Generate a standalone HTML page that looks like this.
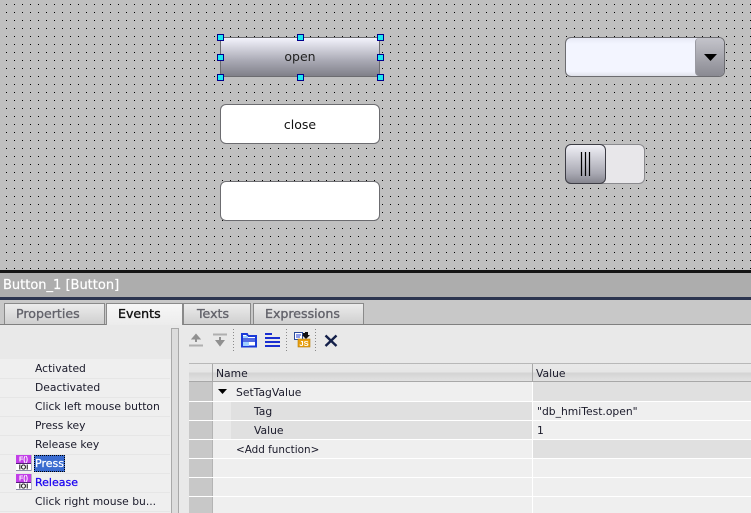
<!DOCTYPE html>
<html><head><meta charset="utf-8">
<style>
html,body{margin:0;padding:0}
body{width:751px;height:513px;overflow:hidden;position:relative;background:#e9e9e9;font-family:"DejaVu Sans",sans-serif;font-size:10.75px;color:#1a1a2a}
div,svg{position:absolute}
.t{white-space:nowrap;line-height:14px}
.btn{box-sizing:border-box;border:1px solid #6c6c70;border-radius:6px;text-align:center}
.h{width:5px;height:5px;background:#1fe8f0;border:1px solid #00008c}
.tab{box-sizing:border-box;top:303px;height:21px;border:1px solid #8a8a8a;border-bottom:none;background:linear-gradient(#ececec,#cfcfcf);color:#63636b;font-size:12.6px;line-height:20px;padding-left:11px;text-align:left;white-space:nowrap;-webkit-text-stroke:.35px #63636b}
.sep{left:0;width:170px;height:1px;background:#e6e6e6}
</style></head><body>

<!-- canvas -->
<svg style="left:0;top:0" width="751" height="270"><defs><pattern id="d" x="6" y="4" width="8" height="8" patternUnits="userSpaceOnUse"><rect width="1" height="1" fill="#000"/></pattern></defs><rect width="751" height="270" fill="#c0c0c0"/><rect width="751" height="270" fill="url(#d)"/></svg>

<!-- open -->
<div class="btn" style="left:220px;top:37px;width:160px;height:40px;background:linear-gradient(#f3f3fc,#a9a9b4 60%,#808089);font-size:12.5px;line-height:38px;color:#222;border-radius:4px">open</div>
<div class="h" style="left:217px;top:34px"></div><div class="h" style="left:297px;top:34px"></div><div class="h" style="left:377px;top:34px"></div>
<div class="h" style="left:217px;top:54px"></div><div class="h" style="left:377px;top:54px"></div>
<div class="h" style="left:217px;top:74px"></div><div class="h" style="left:297px;top:74px"></div><div class="h" style="left:377px;top:74px"></div>
<!-- close -->
<div class="btn" style="left:220px;top:104px;width:160px;height:40px;background:#fff;font-size:12.5px;line-height:39px;color:#111">close</div>
<!-- empty -->
<div class="btn" style="left:220px;top:181px;width:160px;height:40px;background:#fff"></div>
<!-- combo -->
<div class="btn" style="left:565px;top:37px;width:160px;height:40px;background:linear-gradient(#e6e8f4,#f3f5ff 15%,#f3f5ff 88%,#dfe1ea);overflow:hidden">
<div style="left:129px;top:0;width:29px;height:38px;background:linear-gradient(#c4c4cb,#8a8a92);border-left:1px solid #9a9aa2;border-radius:4px 0 0 4px"></div>
<svg style="left:138px;top:16px" width="14" height="8"><path d="M0 0H13L6.5 7Z" fill="#000"/></svg>
</div>
<!-- toggle -->
<div class="btn" style="left:565px;top:144px;width:80px;height:40px;background:#e8e7ea;border-color:#8a8a8e"></div>
<div class="btn" style="left:565px;top:144px;width:41px;height:40px;background:linear-gradient(#f0f0f6,#a8a8b2 75%,#85858e);border-color:#3c3c44;border-width:1.5px"></div>
<svg style="left:580px;top:152px" width="12" height="24"><path d="M1.5 0V24M5.5 0V24M9.5 0V24" stroke="#000" stroke-width="1.2"/></svg>

<!-- divider + title -->
<div style="left:0;top:270px;width:751px;height:3px;background:#141414"></div>
<div style="left:0;top:273px;width:751px;height:24px;background:#adadad"></div>
<div class="t" style="left:3px;top:279px;color:#fff;font-size:13px;-webkit-text-stroke:.2px #fff">Button_1 [Button]</div>
<div style="left:0;top:297px;width:751px;height:3px;background:#2c3550"></div>

<!-- tabs -->
<div style="left:0;top:300px;width:751px;height:24px;background:#c8c8c8"></div>
<div style="left:0;top:324px;width:751px;height:1px;background:#808080"></div>
<div class="tab" style="left:4px;width:101px">Properties</div>
<div class="tab" style="left:106px;width:77px;height:22px;background:linear-gradient(#f7f7f7,#ececec);color:#111;-webkit-text-stroke:.35px #111">Events</div>
<div class="tab" style="left:183px;width:68px;padding-left:13px">Texts</div>
<div class="tab" style="left:253px;width:111px">Expressions</div>

<!-- left list -->
<div style="left:0;top:359px;width:171px;height:154px;background:#efefef"></div>
<div class="sep" style="top:378px"></div><div class="sep" style="top:397px"></div><div class="sep" style="top:416px"></div><div class="sep" style="top:435px"></div><div class="sep" style="top:454px"></div><div class="sep" style="top:473px"></div><div class="sep" style="top:492px"></div><div class="sep" style="top:511px"></div>
<div class="t" style="left:35px;top:362px">Activated</div>
<div class="t" style="left:35px;top:381px">Deactivated</div>
<div class="t" style="left:35px;top:400px">Click left mouse button</div>
<div class="t" style="left:35px;top:419px">Press key</div>
<div class="t" style="left:35px;top:438px">Release key</div>
<div style="left:34px;top:455px;width:31px;height:17px;box-sizing:border-box;background:#3a6bd0;border:1px dotted #000"></div>
<div class="t" style="left:35px;top:457px;color:#fff;font-size:11px;-webkit-text-stroke:.25px #fff">Press</div>
<div class="t" style="left:35px;top:476px;color:#1a00f0;font-size:11px;-webkit-text-stroke:.25px #1a00f0">Release</div>
<div class="t" style="left:35px;top:495px">Click right mouse bu...</div>
<svg style="left:16px;top:455px" width="16" height="17"><rect width="15.5" height="16" fill="#fff"/><rect width="15" height="8" fill="#c23ee8"/><rect y="8" width="15" height="1" fill="#55207a"/><rect y="15" width="15" height="1" fill="#8a8aa8"/><rect x="15" width=".5" height="16" fill="#7a7a9a"/><text x="7.500" y="6.500" font-size="7" text-anchor="middle" fill="#fff" font-family="Liberation Sans" font-weight="bold">F()</text><text x="7.500" y="14.500" font-size="7" text-anchor="middle" fill="#111" font-family="Liberation Sans" font-weight="bold">IOI</text></svg>
<svg style="left:16px;top:474px" width="16" height="17"><rect width="15.5" height="16" fill="#fff"/><rect width="15" height="8" fill="#c23ee8"/><rect y="8" width="15" height="1" fill="#55207a"/><rect y="15" width="15" height="1" fill="#8a8aa8"/><rect x="15" width=".5" height="16" fill="#7a7a9a"/><text x="7.500" y="6.500" font-size="7" text-anchor="middle" fill="#fff" font-family="Liberation Sans" font-weight="bold">F()</text><text x="7.500" y="14.500" font-size="7" text-anchor="middle" fill="#111" font-family="Liberation Sans" font-weight="bold">IOI</text></svg>

<!-- scrollbar -->
<div style="left:171px;top:328px;width:8px;height:185px;box-sizing:border-box;background:#dcdcdc;border:1px solid #a8a8a8;border-bottom:none"></div>

<!-- toolbar -->
<svg style="left:185px;top:328px" width="160" height="24">
<path d="M4 17.500H18" stroke="#b0b0b0" stroke-width="2"/><path d="M11 14V8M8 10.500L11 7L14 10.500Z" stroke="#909090" stroke-width="2" fill="#909090"/>
<path d="M28 6.500H42" stroke="#b0b0b0" stroke-width="2"/><path d="M35 9V15M32 13L35 17L38 13Z" stroke="#909090" stroke-width="2" fill="#909090"/>
<path d="M48.500 1V23" stroke="#8a8a8a" stroke-dasharray="1 2"/>
<path d="M57 6H62L63 8H71V18.500H57Z" fill="#fff" stroke="#1a3ad8" stroke-width="2"/><path d="M57 11H71M57 13H71" stroke="#1a3ad8" stroke-width="1.500"/><rect x="58" y="14" width="6" height="4" fill="#9fd0ff"/><rect x="58" y="8" width="5" height="2" fill="#9fd0ff"/>
<path d="M80 6H87M80 10H95M80 14H95M80 18H95" stroke="#1a2ed0" stroke-width="2"/>
<path d="M101.500 1V23" stroke="#8a8a8a" stroke-dasharray="1 2"/>
<rect x="109.500" y="4.500" width="8" height="7" fill="#fff" stroke="#2a4a9a"/><path d="M111 7H116M111 9H115" stroke="#1a3ad8"/><path d="M118 5H120V4H123V7H125L121 11L117 7H118Z" fill="#111"/>
<rect x="113" y="11" width="12" height="8" fill="#e8a010" stroke="#b87c08" stroke-width=".6"/><text x="119" y="18" font-size="7.500" text-anchor="middle" fill="#fff" font-family="Liberation Sans" font-weight="bold">JS</text>
<path d="M130.500 1V23" stroke="#8a8a8a" stroke-dasharray="1 2"/>
<path d="M140.500 7.500L151.500 18M151.500 7.500L140.500 18" stroke="#14204a" stroke-width="2.400"/>
</svg>

<!-- table -->
<div style="left:189px;top:363px;width:562px;height:150px;background:#fff"></div>
<div style="left:189px;top:363px;width:562px;height:1px;background:#b8b8b8"></div>
<div style="left:189px;top:364px;width:562px;height:17px;background:linear-gradient(#e9e9e9,#e6e6e6 45%,#d4d4d4 55%,#e2e2e2)"></div>
<div style="left:189px;top:381px;width:562px;height:1px;background:#a8a8a8"></div>
<div style="left:212px;top:364px;width:1px;height:17px;background:#a8a8a8"></div>
<div style="left:532px;top:364px;width:1px;height:17px;background:#a8a8a8"></div>
<div class="t" style="left:216px;top:367px">Name</div>
<div class="t" style="left:536px;top:367px">Value</div>

<div style="left:189px;top:382px;width:23px;height:131px;background:#c8c8c8"></div>
<div style="left:212px;top:382px;width:1px;height:131px;background:#b4b4b4"></div>

<!-- rows -->
<div style="left:213px;top:382px;width:319px;height:19px;background:#efefef"></div>
<div style="left:533px;top:382px;width:218px;height:19px;background:#e0e0e0"></div>
<div style="left:213px;top:402px;width:18px;height:18px;background:#e9e9e9"></div>
<div style="left:231px;top:402px;width:301px;height:18px;background:#e0e0e0"></div>
<div style="left:533px;top:402px;width:218px;height:18px;background:#efefef"></div>
<div style="left:213px;top:421px;width:18px;height:18px;background:#e9e9e9"></div>
<div style="left:231px;top:421px;width:301px;height:18px;background:#e0e0e0"></div>
<div style="left:533px;top:421px;width:218px;height:18px;background:#efefef"></div>
<div style="left:213px;top:440px;width:319px;height:18px;background:#efefef"></div>
<div style="left:533px;top:440px;width:218px;height:18px;background:#e0e0e0"></div>
<div style="left:213px;top:459px;width:319px;height:18px;background:#efefef"></div>
<div style="left:533px;top:459px;width:218px;height:18px;background:#efefef"></div>
<div style="left:213px;top:478px;width:319px;height:18px;background:#efefef"></div>
<div style="left:533px;top:478px;width:218px;height:18px;background:#efefef"></div>
<div style="left:213px;top:497px;width:319px;height:16px;background:#efefef"></div>
<div style="left:533px;top:497px;width:218px;height:16px;background:#efefef"></div>
<div style="left:189px;top:401px;width:562px;height:1px;background:#fff"></div>
<div style="left:189px;top:420px;width:562px;height:1px;background:#fff"></div>
<div style="left:189px;top:439px;width:562px;height:1px;background:#fff"></div>
<div style="left:189px;top:458px;width:562px;height:1px;background:#fff"></div>
<div style="left:189px;top:477px;width:562px;height:1px;background:#fff"></div>
<div style="left:189px;top:496px;width:562px;height:1px;background:#fff"></div>

<svg style="left:218px;top:389px" width="9" height="6"><path d="M0 0H9L4.500 5Z" fill="#000"/></svg>
<div class="t" style="left:236px;top:386px">SetTagValue</div>
<div class="t" style="left:254px;top:405px">Tag</div>
<div class="t" style="left:254px;top:424px">Value</div>
<div class="t" style="left:236px;top:443px;font-size:10.4px">&lt;Add function&gt;</div>
<div class="t" style="left:537px;top:405px">"db_hmiTest.open"</div>
<div class="t" style="left:537px;top:424px">1</div>
</body></html>
